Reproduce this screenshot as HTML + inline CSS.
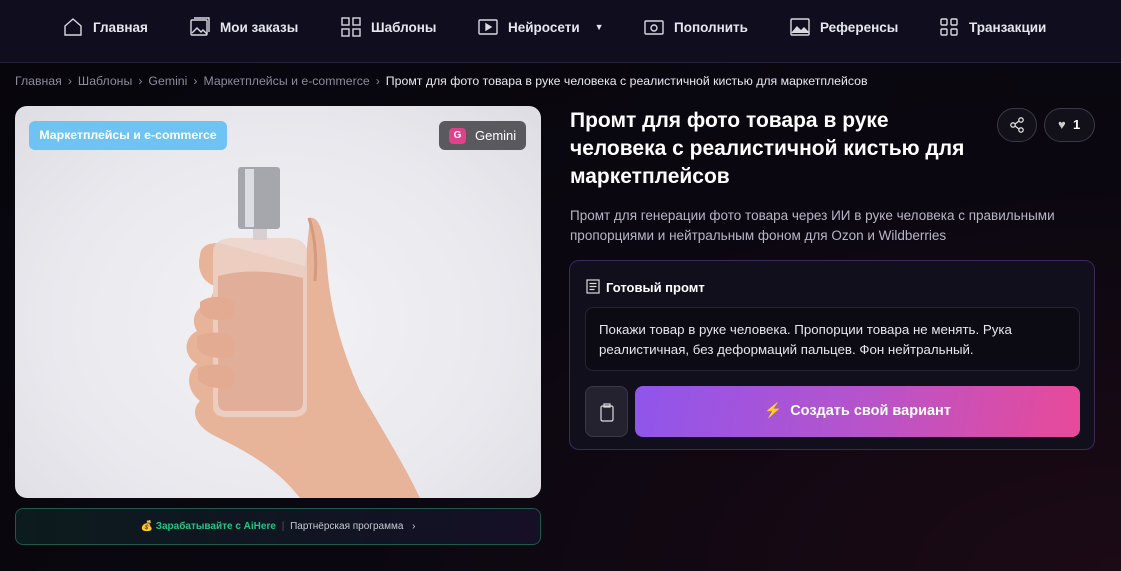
<!DOCTYPE html>
<html><head><meta charset="utf-8"><style>
*{box-sizing:border-box;margin:0;padding:0}
body{width:1121px;height:571px;overflow:hidden;font-family:"Liberation Sans",sans-serif;background:radial-gradient(ellipse at 100% 100%,#1c0a16 0%,#0a0710 50%,#07060c 100%);color:#fff;position:relative}
.hdr{position:absolute;left:0;top:0;width:1121px;height:63px;background:#0f0d1e;border-bottom:1px solid #25223a}
.nav{position:absolute;top:16px;display:flex;align-items:center;gap:9px;font-size:13.5px;font-weight:bold;color:#e6e6ee}
.nav svg{width:22px;height:22px;stroke:#d8d8e0;fill:none;stroke-width:1.4}
.bc{position:absolute;left:15px;top:74px;font-size:12.3px;color:#8d8a9c}
.bc b{font-weight:normal;color:#e8e8f0}
.bc i{font-style:normal;margin:0 6px}
.img{position:absolute;left:15px;top:106px;width:526px;height:392px;border-radius:12px;overflow:hidden;background:radial-gradient(ellipse at 50% 55%,#f3f3f6 0%,#e9e9ee 60%,#dedde3 100%)}
.tag{position:absolute;left:29px;top:121px;width:198px;height:29px;border-radius:6px;background:#6ec3f3;font-size:12.3px;font-weight:bold;color:#fff;line-height:29px;text-align:center}
.gem{position:absolute;left:439px;top:121px;width:87px;height:29px;border-radius:6px;background:#5a595d;font-size:13px;color:#fff;line-height:29px;padding-left:36px}
.gem span{position:absolute;left:10px;top:7px;width:17px;height:16px;border-radius:4px;background:#e43f8a;font-size:10px;font-weight:bold;line-height:16px;text-align:center}
.aff{position:absolute;left:15px;top:508px;width:526px;height:37px;border:1px solid #1d5a4a;border-radius:8px;background:linear-gradient(90deg,#0c1b1d,#111324 70%,#160f25);font-size:10px;text-align:center;line-height:35px}
.aff .g{color:#25c486;font-weight:bold}
.aff .s{color:#c8c8d0}
h1{position:absolute;left:570px;top:107px;font-size:21px;line-height:28px;font-weight:bold;width:420px}
.desc{position:absolute;left:570px;top:206px;width:520px;font-size:13.5px;line-height:20px;color:#b8b6c6}
.cb{position:absolute;top:108px;height:34px;border:1px solid #3b3948;border-radius:17px;background:#121018}
.card{position:absolute;left:569px;top:260px;width:526px;height:190px;border:1px solid #3a2a5c;border-radius:10px;background:#120f1d}
.ct{position:absolute;left:16px;top:18px;font-size:13px;font-weight:bold}
.pb{position:absolute;left:15px;top:46px;width:495px;height:64px;border:1px solid #272434;border-radius:8px;background:#0c0a13;padding:12px 13px;font-size:13.3px;line-height:20px;color:#e6e6ee}
.cp{position:absolute;left:15px;top:125px;width:43px;height:51px;border:1px solid #3a3848;border-radius:8px;background:#25222f}
.go{position:absolute;left:65px;top:125px;width:445px;height:51px;border-radius:8px;background:linear-gradient(100deg,#8f55ec,#b554cc 50%,#e94a98);font-size:14.5px;font-weight:bold;text-align:center;line-height:51px}
</style></head><body>
<div class="hdr">
<div class="nav" style="left:62px"><svg viewBox="0 0 22 22"><path d="M3 10L11 3l8 7v9H3z"/></svg>Главная</div>
<div class="nav" style="left:189px"><svg viewBox="0 0 22 22"><rect x="2" y="4" width="16" height="15" rx="1"/><path d="M5 2h15v14"/><path d="M3 17l5-5 4 4 2-2 4 4"/></svg>Мои заказы</div>
<div class="nav" style="left:340px"><svg viewBox="0 0 22 22"><rect x="2" y="2" width="7" height="7"/><rect x="13" y="2" width="7" height="7"/><rect x="2" y="13" width="7" height="7"/><rect x="13" y="13" width="7" height="7"/></svg>Шаблоны</div>
<div class="nav" style="left:477px"><svg viewBox="0 0 22 22"><rect x="2" y="4" width="18" height="14" rx="1"/><path d="M9 8v6l5-3z" fill="#d8d8e0"/></svg>Нейросети <span style="font-size:9px;margin-left:6px">▼</span></div>
<div class="nav" style="left:643px"><svg viewBox="0 0 22 22"><rect x="2" y="5" width="18" height="13" rx="1"/><circle cx="11" cy="12" r="3"/></svg>Пополнить</div>
<div class="nav" style="left:789px"><svg viewBox="0 0 22 22"><rect x="2" y="3" width="18" height="16" rx="1"/><path d="M3 17l5-6 4 4 3-3 5 5" fill="#d8d8e0"/></svg>Референсы</div>
<div class="nav" style="left:938px"><svg viewBox="0 0 22 22"><rect x="3" y="3" width="6" height="6" rx="1"/><rect x="13" y="3" width="6" height="6" rx="1"/><rect x="3" y="13" width="6" height="6" rx="1"/><rect x="13" y="13" width="6" height="6" rx="1"/></svg>Транзакции</div>
</div>
<div class="bc">Главная<i>›</i>Шаблоны<i>›</i>Gemini<i>›</i>Маркетплейсы и e-commerce<i>›</i><b>Промт для фото товара в руке человека с реалистичной кистью для маркетплейсов</b></div>
<div class="img"><svg width="526" height="392" viewBox="0 0 526 392">
<path d="M295 112 C305 110 310 130 312 160 C315 200 325 240 345 285 C365 320 390 360 405 392 L285 392 C260 360 230 345 200 330 C180 320 175 305 185 295 C172 285 170 268 182 258 C168 250 168 232 182 225 C175 215 180 200 195 196 L200 180 C185 175 182 160 185 150 C185 140 195 135 208 138 L215 140 L290 160 Z" fill="#e7b49a"/>
<path d="M198 146 Q198 134 215 132 L275 132 Q292 134 292 146 L292 300 Q292 311 278 311 L212 311 Q198 311 198 300Z" fill="#ecd2c8" opacity=".85"/>
<path d="M203 170 Q240 160 288 172 L288 296 Q288 305 278 305 L212 305 Q203 305 203 296Z" fill="#dca38b" opacity=".75"/>
<rect x="238" y="122" width="14" height="12" fill="#d8d0d0"/>
<rect x="223" y="61" width="42" height="62" rx="3" fill="#a6a7ad"/>
<rect x="230" y="63" width="9" height="58" fill="#dcdde2"/>
<path d="M185 196 C195 188 215 190 220 198 L218 212 C205 216 190 214 185 206Z M182 230 C195 224 215 226 220 234 L218 250 C205 254 188 252 182 242Z M183 262 C195 256 215 258 220 266 L218 280 C205 284 190 282 183 274Z" fill="#e3ac92"/>
<path d="M294 112 C300 130 302 150 300 175" stroke="#d39a80" stroke-width="3" fill="none"/>
</svg></div>
<div class="tag">Маркетплейсы и e-commerce</div>
<div class="gem"><span>G</span>Gemini</div>
<div class="aff"><span style="color:#e8b020">💰</span> <span class="g">Зарабатывайте с AiHere</span> <span style="color:#555;margin:0 3px">|</span> <span class="s">Партнёрская программа</span> <span class="s" style="margin-left:6px">›</span></div>
<h1>Промт для фото товара в руке человека с реалистичной кистью для маркетплейсов</h1>
<div class="cb" style="left:997px;width:40px"><svg width="38" height="32" viewBox="0 0 38 32" fill="none" stroke="#ddd" stroke-width="1.3"><circle cx="23" cy="11" r="2.2"/><circle cx="15" cy="16" r="2.2"/><circle cx="23" cy="21" r="2.2"/><path d="M17 15l4-3M17 17l4 3"/></svg></div>
<div class="cb" style="left:1044px;width:51px;font-size:13px;font-weight:bold;line-height:32px;padding-left:13px"><span style="color:#ccc">♥</span>&nbsp; 1</div>
<div class="desc">Промт для генерации фото товара через ИИ в руке человека с правильными пропорциями и нейтральным фоном для Ozon и Wildberries</div>
<div class="card">
<div class="ct"><svg width="14" height="15" viewBox="0 0 14 15" fill="none" stroke="#ddd" stroke-width="1.2" style="vertical-align:-2px;margin-right:6px"><rect x="1" y="1" width="12" height="13"/><path d="M3.5 4.5h7M3.5 7.5h7M3.5 10.5h5"/></svg>Готовый промт</div>
<div class="pb">Покажи товар в руке человека. Пропорции товара не менять. Рука реалистичная, без деформаций пальцев. Фон нейтральный.</div>
<div class="cp"><svg width="41" height="49" viewBox="0 0 41 49" fill="none" stroke="#ddd" stroke-width="1.2"><rect x="15" y="19" width="12" height="15" rx="1.5"/><rect x="18" y="17" width="6" height="3"/></svg></div>
<div class="go">⚡&nbsp; Создать свой вариант</div>
</div>
</body></html>
